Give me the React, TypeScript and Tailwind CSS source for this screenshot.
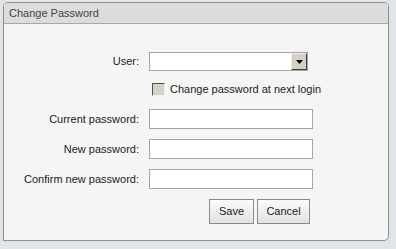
import React from "react";

const font = { fontFamily: '"Liberation Sans", Arial, sans-serif' };

const Field = ({ label }: { label: string }) => {
  return (
    <div className="flex items-center h-[20px]">
      <label className="w-[135px] text-right text-[11px] text-[#222]">{label}</label>
      <input
        type="password"
        className="ml-[10px] w-[164px] h-[20px] bg-white border border-[#a5a5a5] outline-none"
      />
    </div>
  );
};

const App = () => {
  return (
    <div className="w-[396px] h-[249px] bg-[#dfe5e8] pt-[2px] pl-[3px]" style={font}>
      <div className="w-[386px] h-[239px] flex flex-col rounded-t-[5px] rounded-br-[5px] border border-[#8e8e8e] bg-[#f5f5f5] overflow-hidden">
        <div className="h-[21px] flex items-center px-[5px] bg-[#dcdcdc] border-b border-[#a8a8a8] text-[11px] text-[#444]">
          Change Password
        </div>
        <div className="flex flex-col pt-[28px]">
          <div className="flex items-center h-[19px]">
            <span className="w-[135px] text-right text-[11px] text-[#222]">User:</span>
            <div className="ml-[10px] w-[159px] h-[19px] flex bg-white border border-[#a5a5a5]">
              <div className="flex-1" />
              <div className="w-[16px] h-full flex items-center justify-center bg-[#d4d0c8] border-t border-l border-t-[#f0f0f0] border-l-[#f0f0f0] border-b border-r border-b-[#404040] border-r-[#404040]">
                <svg width="7" height="4" viewBox="0 0 7 4">
                  <path d="M0 0h7L3.5 4z" fill="#000" />
                </svg>
              </div>
            </div>
          </div>
          <div className="flex items-center h-[13px] mt-[12px] ml-[148px]">
            <span className="w-[13px] h-[13px] bg-[#d4d0c8] border-t border-l border-t-[#505050] border-l-[#505050] border-b border-r border-b-[#f0f0f0] border-r-[#f0f0f0]" />
            <span className="ml-[5px] text-[11px] text-[#222]">Change password at next login</span>
          </div>
          <div className="flex flex-col gap-[10px] mt-[13px]">
            <Field label="Current password:" />
            <Field label="New password:" />
            <Field label="Confirm new password:" />
          </div>
          <div className="flex gap-[3px] mt-[10px] ml-[205px]">
            <button className="w-[45px] h-[25px] border border-[#8a8a8a] bg-gradient-to-b from-[#fafafa] to-[#e2e2e2] text-[11px] text-[#222]">
              Save
            </button>
            <button className="w-[53px] h-[25px] border border-[#8a8a8a] bg-gradient-to-b from-[#fafafa] to-[#e2e2e2] text-[11px] text-[#222]">
              Cancel
            </button>
          </div>
        </div>
      </div>
    </div>
  );
};

export default App;
